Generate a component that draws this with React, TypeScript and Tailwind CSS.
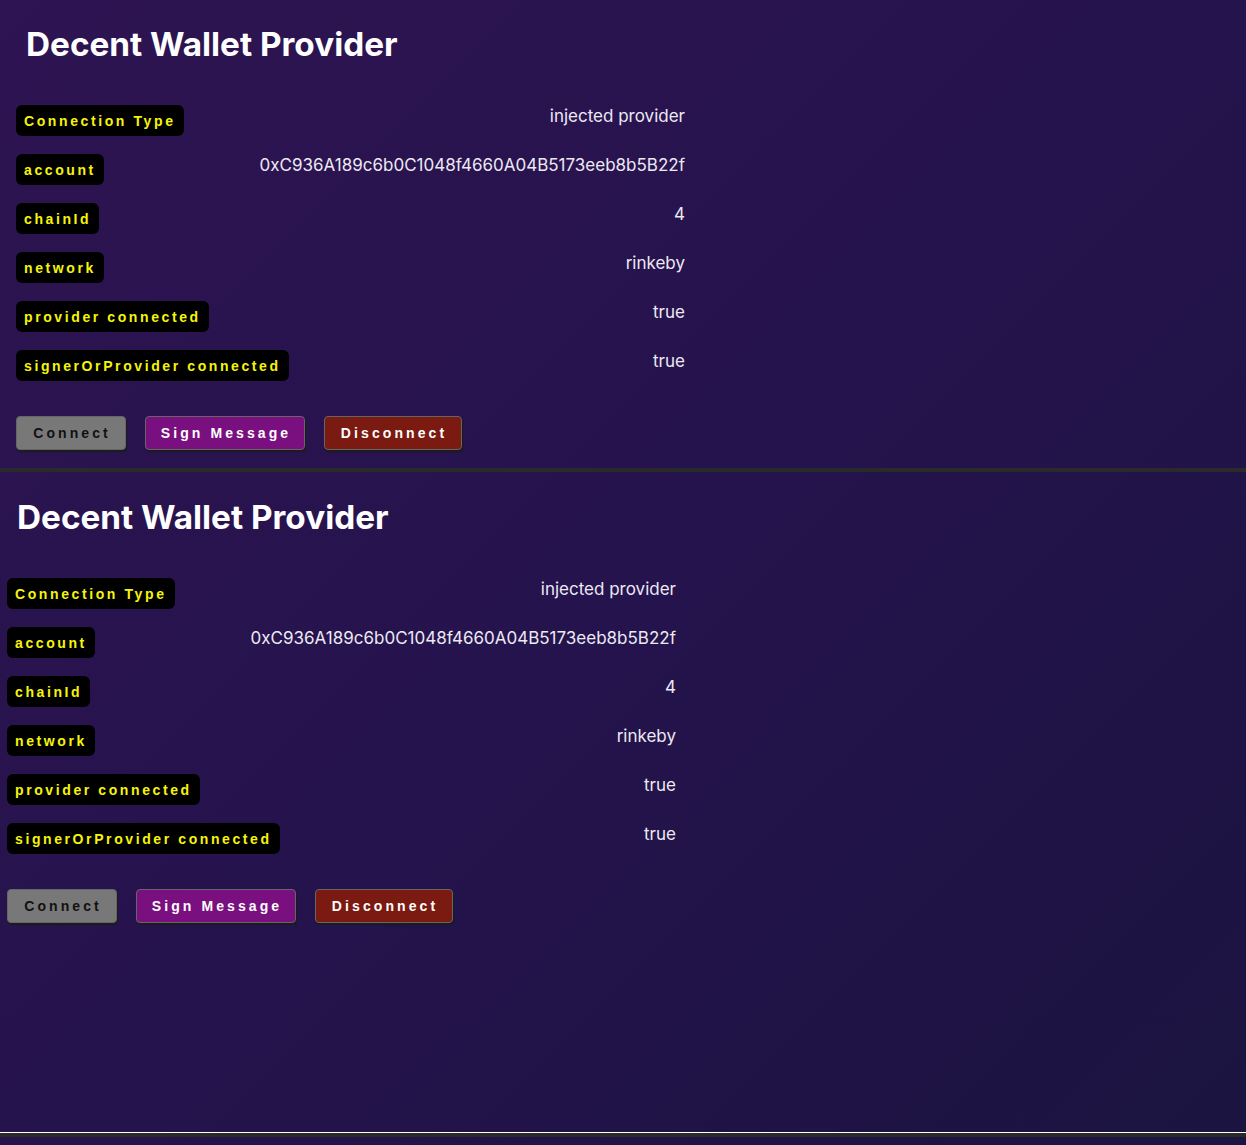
import React from "react";

const rows: [string, string][] = [
  ["Connection Type", "injected provider"],
  ["account", "0xC936A189c6b0C1048f4660A04B5173eeb8b5B22f"],
  ["chainId", "4"],
  ["network", "rinkeby"],
  ["provider connected", "true"],
  ["signerOrProvider connected", "true"],
];

function Section({ pad }: { pad: "a" | "b" }) {
  return (
    <div className={pad === "a" ? "pl-[16px] pt-[24px] pb-[18px]" : "pl-[7px] pt-[25px]"}>
      <h1 className="ml-[10px] text-[33.3px] font-bold leading-[40px] text-white [font-family:Inter,'Noto_Sans',sans-serif]">
        Decent Wallet Provider
      </h1>
      <div className="mt-[41px] flex w-[669px] flex-col gap-[18px]">
        {rows.map(([k, v]) => (
          <div key={k} className="flex items-start justify-between">
            <span className="rounded-[6px] bg-black px-[8px] pt-[8px] pb-[6px] text-[14px] font-bold leading-[17px] tracking-[2.6px] text-[#f5f50a] [font-family:'Liberation_Sans',Arial,sans-serif]">
              {k}
            </span>
            <span className="-mt-[1px] text-[17px] leading-6 text-[#ece9f3] [font-family:Inter,'Noto_Sans',sans-serif]">
              {v}
            </span>
          </div>
        ))}
      </div>
      <div className="mt-[35px] flex gap-[19px]">
        <button className="h-[34px] w-[110px] rounded-[4px] border border-[#666] bg-[#787878] pl-[2px] text-[14px] font-bold tracking-[0.22em] text-[#111] shadow-[1px_2px_1px_#1c1c1c] [font-family:'Liberation_Sans',Arial,sans-serif]">
          Connect
        </button>
        <button className="h-[34px] w-[160px] rounded-[4px] border border-[#666] bg-[#7a1080] pl-[2px] text-[14px] font-bold tracking-[0.22em] text-white shadow-[1px_2px_1px_#1c1c1c] [font-family:'Liberation_Sans',Arial,sans-serif]">
          Sign Message
        </button>
        <button className="h-[34px] w-[138px] rounded-[4px] border border-[#666] bg-[#7a1a10] pl-[2px] text-[14px] font-bold tracking-[0.22em] text-white shadow-[1px_2px_1px_#1c1c1c] [font-family:'Liberation_Sans',Arial,sans-serif]">
          Disconnect
        </button>
      </div>
    </div>
  );
}

export default function App() {
  return (
    <div className="flex min-h-[1145px] flex-col bg-[linear-gradient(135deg,#2e1452_0%,#25134d_50%,#1b1440_100%)]">
      <div className="h-[468px]">
        <Section pad="a" />
      </div>
      <div className="h-[4px] bg-[#2a2a2a]" />
      <div className="h-[660px]">
        <Section pad="b" />
      </div>
      <div className="h-[1px] bg-white" />
      <div className="h-[4px] bg-[#2a2a2a]" />
      <div className="flex-1" />
    </div>
  );
}
